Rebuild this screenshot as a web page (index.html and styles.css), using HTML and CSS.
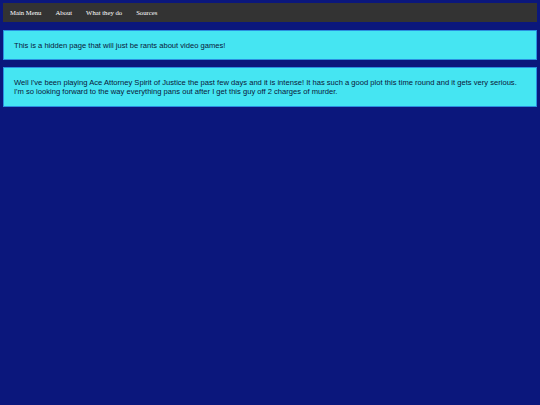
FILE: index.html
```html
<!DOCTYPE html>
<html>
<head>
<meta charset="utf-8">
<link rel="stylesheet" href="styles.css">
</head>
<body>
<nav class="nav">
  <a href="#">Main Menu</a>
  <a href="#">About</a>
  <a href="#">What they do</a>
  <a href="#">Sources</a>
</nav>
<div class="box">
  <p>This is a hidden page that will just be rants about video games!</p>
</div>
<div class="box">
  <p>Well I've been playing Ace Attorney Spirit of Justice the past few days and it is intense! It has such a good plot this time round and it gets very serious. I'm so looking forward to the way everything pans out after I get this guy off 2 charges of murder.</p>
</div>
</body>
</html>
```
FILE: styles.css
```css
html, body {
  margin: 0;
  padding: 0;
}
body {
  background: #0b177c;
  padding: 3px;
  min-height: 405px;
  box-sizing: border-box;
}
.nav {
  background: #333333;
  display: flex;
  height: 19px;
  align-items: center;
}
.nav a {
  font-family: "Liberation Serif", serif;
  font-size: 6.7px;
  color: #ffffff;
  text-decoration: none;
  padding: 0 7px;
}
.box {
  background: #45e5f2;
  border: 1px solid #2a8fe0;
  margin-top: 8px;
  padding: 9.5px 10px 9px;
}
.box + .box {
  margin-top: 7px;
}
.box p {
  margin: 0;
  font-family: "Liberation Sans", Arial, sans-serif;
  font-size: 7.6px;
  line-height: 9.5px;
  color: #0a1638;
}
```
